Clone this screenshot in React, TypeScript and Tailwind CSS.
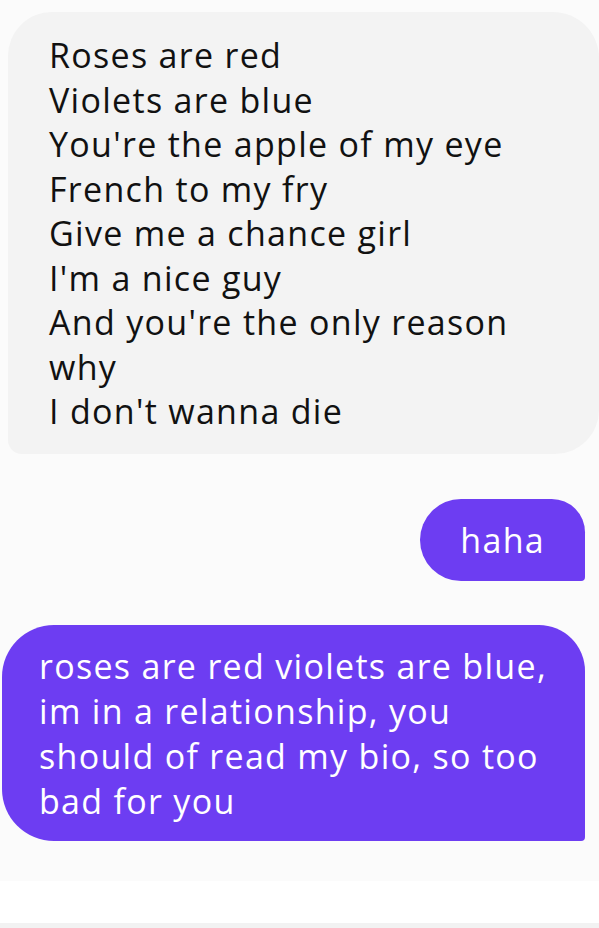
export default function App() {
  const poem = [
    'Roses are red',
    'Violets are blue',
    "You're the apple of my eye",
    'French to my fry',
    'Give me a chance girl',
    "I'm a nice guy",
    "And you're the only reason",
    'why',
    "I don't wanna die",
  ];

  const reply = [
    'roses are red violets are blue,',
    'im in a relationship, you',
    'should of read my bio, so too',
    'bad for you',
  ];

  return (
    <div
      className="w-[599px] h-[928px] bg-[#fbfbfb] flex flex-col overflow-hidden"
      style={{ fontFamily: '"Open Sans", "Noto Sans", sans-serif' }}
    >
      {/* incoming message */}
      <div className="mt-[12px] ml-[8px] mr-0 bg-[#f3f3f3] rounded-tl-[44px] rounded-tr-[46px] rounded-br-[44px] rounded-bl-[14px] pt-[21px] pb-[20px] pl-[41px] text-[34px] leading-[44.5px] text-[#111] tracking-[1.3px]">
        {poem.map((line) => (
          <div key={line} className="whitespace-nowrap">{line}</div>
        ))}
      </div>

      {/* outgoing */}
      <div className="flex justify-end mt-[45px] mr-[14px]">
        <div className="bg-[#6d3df2] text-white text-[34px] leading-[44.5px] px-[40px] py-[19px] rounded-l-[42px] rounded-tr-[34px] rounded-br-[4px] tracking-[1.3px]">
          haha
        </div>
      </div>

      <div className="mt-[44px] ml-[2px] mr-[14px] bg-[#6d3df2] text-white text-[34px] leading-[45px] pl-[37px] pt-[19px] pb-[17px] rounded-tl-[52px] rounded-bl-[52px] rounded-tr-[46px] rounded-br-[4px] tracking-[1.3px]">
        {reply.map((line) => (
          <div key={line} className="whitespace-nowrap">{line}</div>
        ))}
      </div>

      <div className="mt-[40px] h-[42px] bg-white" />
      <div className="flex-1 bg-[#f2f2f2]" />
    </div>
  );
}
